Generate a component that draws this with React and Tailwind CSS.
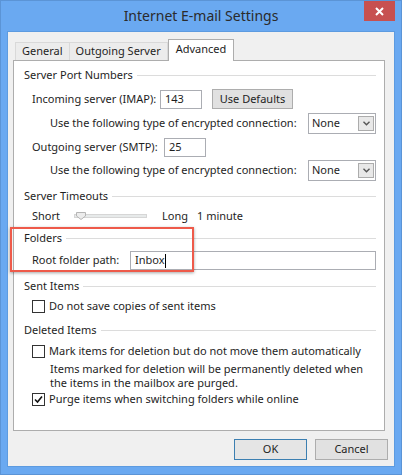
import React from 'react';

const font = { fontFamily: '"Noto Sans", "Open Sans", sans-serif' };

const GroupHeader = ({ title, className = '' }) => (
  <div className={`flex items-center h-[18px] pl-[10px] ${className}`}>
    <span>{title}</span>
    <div className="flex-1 h-px bg-[#dcdcdc] ml-[4px]" />
  </div>
);

const Checkbox = ({ checked }) => (
  <div className="w-[13px] h-[13px] border border-[#333333] bg-white flex items-center justify-center">
    {checked && (
      <svg width="9" height="9" viewBox="0 0 9 9">
        <path d="M1 4.5 L3.5 7 L8 1.5" fill="none" stroke="#111" strokeWidth="1.6" />
      </svg>
    )}
  </div>
);

const Select = ({ value }) => (
  <div className="w-[68px] h-[21px] border border-[#abadb3] bg-white flex items-center justify-between pl-[3px] pr-[1px]">
    <span>{value}</span>
    <div className="w-[16px] h-[15px] border border-[#acacac] bg-[#e8e8e8] flex items-center justify-center">
      <svg width="7" height="5" viewBox="0 0 7 5">
        <path d="M0.5 0.8 L3.5 3.8 L6.5 0.8" fill="none" stroke="#555" strokeWidth="1.4" />
      </svg>
    </div>
  </div>
);

const Input = ({ value, className = '', caret }) => (
  <div className={`h-[19px] border border-[#abadb3] bg-white flex items-center pl-[4px] ${className}`}>
    <span>{value}</span>
    {caret && <span className="w-px h-[14px] bg-black" />}
  </div>
);

export default function App() {
  return (
    <div style={font} className="w-[402px] h-[475px] bg-[#6aa9f1] border border-[#5b94d6] flex flex-col text-[11px] text-[#1e1e1e]">
      {/* Title bar */}
      <div className="grid grid-cols-[1fr_auto_1fr] h-[30px] shrink-0">
        <div />
        <div className="text-[14px] text-[#2b2b2b] pt-[4px]">Internet E-mail Settings</div>
        <div className="flex justify-end pr-[6px]">
          <div className="w-[31px] h-[20px] bg-[#c75050] flex items-center justify-center">
            <svg width="9" height="9" viewBox="0 0 9 9">
              <path d="M1 1 L8 8 M8 1 L1 8" stroke="#fff" strokeWidth="2" />
            </svg>
          </div>
        </div>
      </div>

      {/* Client area */}
      <div className="flex-1 mx-[6px] mb-[7px] bg-[#f0f0f0] border border-[#5d9be0] flex flex-col relative">
        {/* Tabs */}
        <div className="flex items-end h-[28px] pl-[7px] pt-[6px]">
          <div className="h-[18px] px-[6px] border border-b-0 border-[#d9d9d9] bg-[#ececec] flex items-center">General</div>
          <div className="h-[18px] px-[6px] border border-b-0 border-l-0 border-[#d9d9d9] bg-[#ececec] flex items-center">Outgoing Server</div>
          <div className="h-[22px] px-[7px] border border-b-0 border-[#adadad] bg-white flex items-center -mb-px relative z-10 pb-[3px]">Advanced</div>
        </div>

        {/* Panel */}
        <div className="ml-[5px] w-[372px] h-[371px] border border-[#adadad] bg-white flex flex-col pr-[8px]">
          <GroupHeader title="Server Port Numbers" className="mt-[5px]" />

          <div className="flex items-center h-[20px] mt-[5px] pl-[18px]">
            <span className="w-[128px]">Incoming server (IMAP):</span>
            <Input value="143" className="w-[42px]" />
            <div className="ml-[10px] w-[81px] h-[20px] border border-[#adadad] bg-[#e1e1e1] flex items-center justify-center">Use Defaults</div>
          </div>

          <div className="flex items-center h-[21px] mt-[4px] pl-[36px]">
            <span className="w-[258px]">Use the following type of encrypted connection:</span>
            <Select value="None" />
          </div>

          <div className="flex items-center h-[19px] mt-[4px] pl-[18px]">
            <span className="w-[132px]">Outgoing server (SMTP):</span>
            <Input value="25" className="w-[42px]" />
          </div>

          <div className="flex items-center h-[21px] mt-[3px] pl-[36px]">
            <span className="w-[258px]">Use the following type of encrypted connection:</span>
            <Select value="None" />
          </div>

          <GroupHeader title="Server Timeouts" className="mt-[6px]" />

          <div className="flex items-center h-[18px] mt-[2px] pl-[18px]">
            <span className="w-[42px]">Short</span>
            <div className="relative w-[73px] h-[10px] flex items-center">
              <div className="w-full h-[4px] bg-[#e7eaea] border border-[#d6d6d6]" />
              <svg className="absolute left-[2px] top-[1px]" width="10" height="8" viewBox="0 0 10 8">
                <path d="M0.5 0.5 H9.5 V4 L5 7.5 L0.5 4 Z" fill="#ececec" stroke="#b5b5b5" />
              </svg>
            </div>
            <span className="ml-[15px]">Long</span>
            <span className="ml-[9px]">1 minute</span>
          </div>

          <GroupHeader title="Folders" className="mt-[4px]" />

          <div className="flex items-center h-[19px] mt-[4px] pl-[18px]">
            <span className="w-[98px] shrink-0">Root folder path:</span>
            <Input value="Inbox" className="flex-1" caret />
          </div>

          <GroupHeader title="Sent Items" className="mt-[7px]" />

          <div className="flex items-center h-[18px] mt-[2px] pl-[18px] gap-[4px]">
            <Checkbox />
            <span>Do not save copies of sent items</span>
          </div>

          <GroupHeader title="Deleted Items" className="mt-[6px]" />

          <div className="flex items-center h-[18px] mt-[3px] pl-[18px] gap-[4px]">
            <Checkbox />
            <span>Mark items for deletion but do not move them automatically</span>
          </div>

          <div className="mt-[2px] pl-[36px] leading-[14px]">
            <div>Items marked for deletion will be permanently deleted when</div>
            <div>the items in the mailbox are purged.</div>
          </div>

          <div className="flex items-center h-[18px] pl-[18px] gap-[4px]">
            <Checkbox checked />
            <span>Purge items when switching folders while online</span>
          </div>
        </div>

        {/* Buttons */}
        <div className="flex justify-end gap-[8px] pr-[6px] mt-[8px]">
          <div className="w-[73px] h-[21px] border border-[#3c7fb1] bg-[#e5e5e5] flex items-center justify-center">OK</div>
          <div className="w-[73px] h-[21px] border border-[#adadad] bg-[#e1e1e1] flex items-center justify-center">Cancel</div>
        </div>

        {/* Highlight box */}
        <div className="absolute left-[2px] top-[195px] w-[184px] h-[45px] border-2 border-[#ee5a4a] shadow-[0_1px_3px_rgba(0,0,0,0.35)]" />
      </div>
    </div>
  );
}
